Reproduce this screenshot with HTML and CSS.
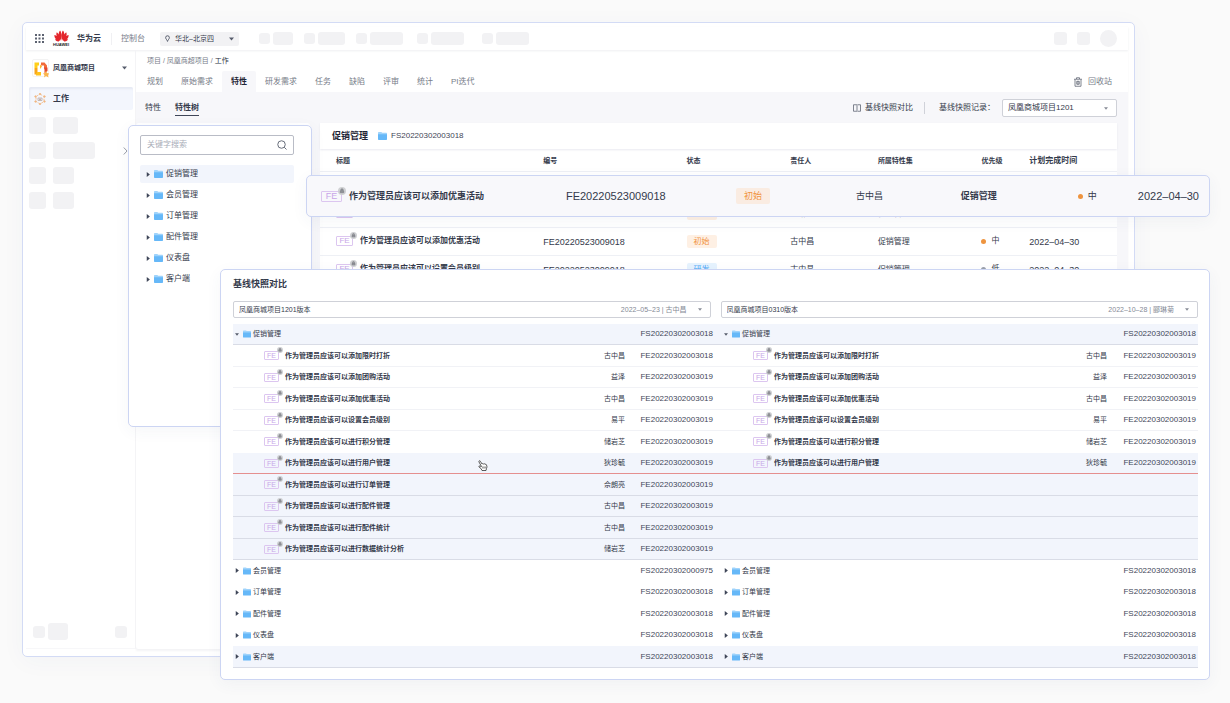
FILE: index.html
```html
<!DOCTYPE html>
<html lang="zh-CN">
<head>
<meta charset="utf-8">
<title>基线快照对比</title>
<link rel="stylesheet" href="styles.css">
</head>
<body>
<svg class="defs" width="0" height="0" aria-hidden="true">
  <symbol id="folder" viewBox="0 0 18 16"><path d="M0 1.500Q0 0 1.500 0H6.500L8.500 1.500H16.500Q18 1.500 18 3V6H0Z" fill="#9fd3fb"/><path d="M0 4.500H18V14.500Q18 16 16.500 16H1.500Q0 16 0 14.500Z" fill="#66b8f8"/></symbol>
  <symbol id="lock" viewBox="0 0 12 12"><circle cx="6" cy="6" r="6" fill="#cfd0d3"/><path d="M4.200 6V4.500a1.800 1.800 0 0 1 3.600 0V6M3.500 6h5v2.500h-5z" fill="#9a9ca1" stroke="#7c7e84" stroke-width="1"/></symbol>
  <symbol id="right" viewBox="0 0 6 8"><path d="M1 0L6 4L1 8Z" fill="#3f4658"/></symbol>
  <symbol id="down" viewBox="0 0 8 6"><path d="M0 0.500H8L4 5.500Z" fill="#575d6c"/></symbol>
</svg>

<div class="stage">
  <div class="window">
    <header class="topbar">
      <svg class="apps" viewBox="0 0 18 18" fill="#5c6270"><path d="M0 0h4v4H0zM7 0h4v4H7zM14 0h4v4h-4zM0 7h4v4H0zM7 7h4v4H7zM14 7h4v4h-4zM0 14h4v4H0zM7 14h4v4H7zM14 14h4v4h-4z"/></svg>
      <div class="logo">
        <svg viewBox="0 0 32 24" fill="#e4262c"><path d="M15 22C10 15 8 5 13 0C17 5 16 15 15 22ZM17 22C22 15 24 5 19 0C15 5 16 15 17 22ZM13 22C7 18 3 10 6 4C11 7 13 15 13 22ZM19 22C25 18 29 10 26 4C21 7 19 15 19 22ZM12 22.500C5 21 0 15 1 10C6 11 11 17 12 22.500ZM20 22.500C27 21 32 15 31 10C26 11 21 17 20 22.500ZM11 23.500C7 25 3 22 2 19C6 18.500 9 21 11 23.500ZM21 23.500C25 25 29 22 30 19C26 18.500 23 21 21 23.500Z"/></svg>
        <span>HUAWEI</span>
      </div>
      <strong class="brand">华为云</strong>
      <a class="console" href="#">控制台</a>
      <button class="region" type="button">
        <svg class="pin" viewBox="0 0 12 16"><path d="M6 1.500a4.500 4.500 0 0 1 4.500 4.500C10.500 9 7 11 6 15C5 11 1.500 9 1.500 6A4.500 4.500 0 0 1 6 1.500Z" fill="none" stroke="#575d6c" stroke-width="2.400"/></svg>
        <span>华北–北京四</span>
        <svg class="down"><use href="#down"/></svg>
      </button>
      <div class="ghosts">
        <div><i class="g-dot"></i><i class="g-w20"></i></div>
        <div><i class="g-dot"></i><i class="g-w27"></i></div>
        <div><i class="g-dot"></i><i class="g-w33"></i></div>
        <div><i class="g-dot"></i><i class="g-w33"></i></div>
        <div><i class="g-dot"></i><i class="g-w33"></i></div>
      </div>
      <div class="account"><i></i><i></i><i class="avatar"></i></div>
    </header>

    <div class="body">
      <aside class="sidebar">
        <button class="project" type="button">
          <span class="project-logo">
            <svg viewBox="0 0 32 36"><path d="M3 5H12V11H9V16H3Z" fill="#ffcf1a"/><path d="M3 16H9V29H3Z" fill="#f9a51a"/><path d="M9 24H16V31H6V27Z" fill="#ffc21a"/><path d="M16 5H23L28 11V17H22V11H16Z" fill="#f26b3a"/><path d="M22 15H29V22L23 27V20Z" fill="#e3482f"/><path d="M14 9L18 13L14 18Z" fill="#ffb52e"/><path d="M26 21L28 26L33 27L30 30L31 35L26 32L22 35L23 30L20 27L24 26Z" fill="#fbb54c"/></svg>
          </span>
          <strong>凤凰商城项目</strong>
          <svg class="down"><use href="#down"/></svg>
        </button>
        <a class="side-item" href="#">
          <svg viewBox="0 0 24 24" fill="none" stroke="#f1b680" stroke-width="1.500"><path d="M12 2L20 7V17L12 22L4 17V7Z" stroke-dasharray="5 2"/><path d="M8 10h8v5H8zM10 13h4M12 10v5" stroke="#b9a9a5"/><g fill="#f1b680"><circle cx="12" cy="2" r="1.500"/><circle cx="21" cy="7" r="1.500"/><circle cx="21" cy="17" r="1.500"/><circle cx="12" cy="22" r="1.500"/><circle cx="3" cy="17" r="1.500"/><circle cx="3" cy="7" r="1.500"/></g></svg>
          <strong>工作</strong>
        </a>
        <div class="side-ghosts">
          <div><i></i><i class="g-w25"></i></div>
          <div><i></i><i class="g-w42"></i><svg class="chevron" viewBox="0 0 10 16"><path d="M1.500 1L8 8L1.500 15" fill="none" stroke="#8d929e" stroke-width="1.800"/></svg></div>
          <div><i></i><i class="g-w21"></i></div>
          <div><i></i><i class="g-w21"></i></div>
        </div>
        <div class="side-foot"><i></i><i class="big"></i><i class="last"></i></div>
      </aside>

      <main class="main">
        <nav class="crumbs"><a href="#">项目</a> / <a href="#">凤凰商超项目</a> / <span>工作</span></nav>
        <nav class="tabs">
          <a href="#">规划</a><a href="#">原始需求</a><a class="active" href="#">特性</a><a href="#">研发需求</a><a href="#">任务</a><a href="#">缺陷</a><a href="#">评审</a><a href="#">统计</a><a href="#">PI迭代</a>
          <button class="recycle" type="button">
            <svg viewBox="0 0 16 20" fill="none" stroke="#575d6c" stroke-width="1.500"><path d="M0 4.500H16M5 4V1.500H11V4M2 5V18.500H14V5M5.500 8.500H10.500V14.500H5.500ZM8 8.500V14.500"/></svg>
            回收站
          </button>
        </nav>
        <div class="work">
          <div class="toolbar">
            <a href="#">特性</a><a class="current" href="#">特性树</a>
            <button class="compare-btn" type="button">
              <svg viewBox="0 0 16 16" fill="none" stroke="#575d6c" stroke-width="1.500"><path d="M7 1.500H1V14.500H7M8 0V16M10 1.500H15V14.500H10" /></svg>
              基线快照对比
            </button>
            <label for="record">基线快照记录：</label>
            <span class="picker record">
              <select id="record"><option>凤凰商城项目1201</option></select>
              <svg class="down"><use href="#down"/></svg>
            </span>
          </div>
          <div class="panes">
            <div class="tree-pane"></div>
            <section class="list">
              <div class="list-head"><h2>促销管理</h2><svg class="folder"><use href="#folder"/></svg><span>FS20220302003018</span></div>
              <table class="features">
                <colgroup><col class="c-title"><col class="c-id"><col class="c-state"><col class="c-owner"><col class="c-set"><col class="c-prio"><col class="c-date"></colgroup>
                <thead><tr><th>标题</th><th>编号</th><th>状态</th><th>责任人</th><th>所属特性集</th><th>优先级</th><th class="wide">计划完成时间</th></tr></thead>
                <tbody>
                  <tr><td><span class="fe">FE<svg><use href="#lock"/></svg></span><b>作为管理员应该可以添加限时打折</b></td><td class="num">FE20220523009018</td><td><span class="tag">初始</span></td><td>古中昌</td><td>促销管理</td><td><span class="prio">中</span></td><td class="num">2022–04–30</td></tr>
                  <tr><td><span class="fe">FE<svg><use href="#lock"/></svg></span><b>作为管理员应该可以添加团购活动</b></td><td class="num">FE20220523009018</td><td><span class="tag">初始</span></td><td>郦琳菊</td><td>促销管理</td><td><span class="prio">中</span></td><td class="num">2022–04–30</td></tr>
                  <tr><td><span class="fe">FE<svg><use href="#lock"/></svg></span><b>作为管理员应该可以添加优惠活动</b></td><td class="num">FE20220523009018</td><td><span class="tag">初始</span></td><td>古中昌</td><td>促销管理</td><td><span class="prio">中</span></td><td class="num">2022–04–30</td></tr>
                  <tr><td><span class="fe">FE<svg><use href="#lock"/></svg></span><b>作为管理员应该可以设置会员级别</b></td><td class="num">FE20220523009018</td><td><span class="tag blue">研发</span></td><td>古中昌</td><td>促销管理</td><td><span class="prio low">低</span></td><td class="num">2022–04–30</td></tr>
                </tbody>
              </table>
            </section>
          </div>
        </div>
      </main>
    </div>
  </div>

  <section class="card tree">
    <div class="search"><input type="text" placeholder="关键字搜索" aria-label="关键字搜索"><svg viewBox="0 0 20 20" fill="none" stroke="#575d6c" stroke-width="1.800"><circle cx="9" cy="9" r="7.500"/><path d="M14.500 14.500L19 19"/></svg></div>
    <ul>
      <li class="selected"><svg class="right"><use href="#right"/></svg><svg class="folder"><use href="#folder"/></svg>促销管理</li>
      <li><svg class="right"><use href="#right"/></svg><svg class="folder"><use href="#folder"/></svg>会员管理</li>
      <li><svg class="right"><use href="#right"/></svg><svg class="folder"><use href="#folder"/></svg>订单管理</li>
      <li><svg class="right"><use href="#right"/></svg><svg class="folder"><use href="#folder"/></svg>配件管理</li>
      <li><svg class="right"><use href="#right"/></svg><svg class="folder"><use href="#folder"/></svg>仪表盘</li>
      <li><svg class="right"><use href="#right"/></svg><svg class="folder"><use href="#folder"/></svg>客户端</li>
    </ul>
  </section>

  <div class="card lifted">
    <div><span class="fe large">FE<svg><use href="#lock"/></svg></span><b>作为管理员应该可以添加优惠活动</b></div>
    <div class="num">FE20220523009018</div>
    <div><span class="tag large">初始</span></div>
    <div>古中昌</div>
    <div><b>促销管理</b></div>
    <div><span class="prio">中</span></div>
    <div class="num">2022–04–30</div>
  </div>

  <section class="card compare">
    <h2>基线快照对比</h2>
    <div class="versions">
      <div class="picker"><select aria-label="左侧基线版本"><option>凤凰商城项目1201版本</option></select><span class="meta">2022–05–23 | 古中昌</span><svg class="down"><use href="#down"/></svg></div>
      <div class="picker"><select aria-label="右侧基线版本"><option>凤凰商城项目0310版本</option></select><span class="meta">2022–10–28 | 郦琳菊</span><svg class="down"><use href="#down"/></svg></div>
    </div>
    <table class="diff">
      <colgroup><col><col class="d-owner"><col class="d-id"><col><col class="d-owner"><col class="d-id2"></colgroup>
      <tbody>
        <tr class="group tint line"><td><svg class="down"><use href="#down"/></svg><svg class="folder"><use href="#folder"/></svg>促销管理</td><td></td><td>FS20220302003018</td><td><svg class="down"><use href="#down"/></svg><svg class="folder"><use href="#folder"/></svg>促销管理</td><td></td><td>FS20220302003018</td></tr>
        <tr class="item"><td><span class="fe">FE<svg><use href="#lock"/></svg></span><b>作为管理员应该可以添加限时打折</b></td><td>古中昌</td><td>FE20220302003018</td><td><span class="fe">FE<svg><use href="#lock"/></svg></span><b>作为管理员应该可以添加限时打折</b></td><td>古中昌</td><td>FE20220302003019</td></tr>
        <tr class="item"><td><span class="fe">FE<svg><use href="#lock"/></svg></span><b>作为管理员应该可以添加团购活动</b></td><td>益泽</td><td>FE20220302003019</td><td><span class="fe">FE<svg><use href="#lock"/></svg></span><b>作为管理员应该可以添加团购活动</b></td><td>益泽</td><td>FE20220302003019</td></tr>
        <tr class="item"><td><span class="fe">FE<svg><use href="#lock"/></svg></span><b>作为管理员应该可以添加优惠活动</b></td><td>古中昌</td><td>FE20220302003019</td><td><span class="fe">FE<svg><use href="#lock"/></svg></span><b>作为管理员应该可以添加优惠活动</b></td><td>古中昌</td><td>FE20220302003019</td></tr>
        <tr class="item"><td><span class="fe">FE<svg><use href="#lock"/></svg></span><b>作为管理员应该可以设置会员级别</b></td><td>易平</td><td>FE20220302003019</td><td><span class="fe">FE<svg><use href="#lock"/></svg></span><b>作为管理员应该可以设置会员级别</b></td><td>易平</td><td>FE20220302003019</td></tr>
        <tr class="item plain"><td><span class="fe">FE<svg><use href="#lock"/></svg></span><b>作为管理员应该可以进行积分管理</b></td><td>储岩芝</td><td>FE20220302003019</td><td><span class="fe">FE<svg><use href="#lock"/></svg></span><b>作为管理员应该可以进行积分管理</b></td><td>储岩芝</td><td>FE20220302003019</td></tr>
        <tr class="item tint removed"><td><span class="fe">FE<svg><use href="#lock"/></svg></span><b>作为管理员应该可以进行用户管理</b></td><td>狄珍毓</td><td>FE20220302003019</td><td><span class="fe">FE<svg><use href="#lock"/></svg></span><b>作为管理员应该可以进行用户管理</b></td><td>狄珍毓</td><td>FE20220302003019</td></tr>
        <tr class="item tint line"><td><span class="fe">FE<svg><use href="#lock"/></svg></span><b>作为管理员应该可以进行订单管理</b></td><td>佘朗亮</td><td>FE20220302003019</td><td></td><td></td><td></td></tr>
        <tr class="item tint line"><td><span class="fe">FE<svg><use href="#lock"/></svg></span><b>作为管理员应该可以进行配件管理</b></td><td>古中昌</td><td>FE20220302003019</td><td></td><td></td><td></td></tr>
        <tr class="item tint line"><td><span class="fe">FE<svg><use href="#lock"/></svg></span><b>作为管理员应该可以进行配件统计</b></td><td>古中昌</td><td>FE20220302003019</td><td></td><td></td><td></td></tr>
        <tr class="item tint line"><td><span class="fe">FE<svg><use href="#lock"/></svg></span><b>作为管理员应该可以进行数据统计分析</b></td><td>储岩芝</td><td>FE20220302003019</td><td></td><td></td><td></td></tr>
        <tr class="group plain"><td><svg class="right"><use href="#right"/></svg><svg class="folder"><use href="#folder"/></svg>会员管理</td><td></td><td>FS20220302000975</td><td><svg class="right"><use href="#right"/></svg><svg class="folder"><use href="#folder"/></svg>会员管理</td><td></td><td>FS20220302003018</td></tr>
        <tr class="group plain"><td><svg class="right"><use href="#right"/></svg><svg class="folder"><use href="#folder"/></svg>订单管理</td><td></td><td>FS20220302003018</td><td><svg class="right"><use href="#right"/></svg><svg class="folder"><use href="#folder"/></svg>订单管理</td><td></td><td>FS20220302003018</td></tr>
        <tr class="group plain"><td><svg class="right"><use href="#right"/></svg><svg class="folder"><use href="#folder"/></svg>配件管理</td><td></td><td>FS20220302003018</td><td><svg class="right"><use href="#right"/></svg><svg class="folder"><use href="#folder"/></svg>配件管理</td><td></td><td>FS20220302003018</td></tr>
        <tr class="group plain"><td><svg class="right"><use href="#right"/></svg><svg class="folder"><use href="#folder"/></svg>仪表盘</td><td></td><td>FS20220302003018</td><td><svg class="right"><use href="#right"/></svg><svg class="folder"><use href="#folder"/></svg>仪表盘</td><td></td><td>FS20220302003018</td></tr>
        <tr class="group tint line"><td><svg class="right"><use href="#right"/></svg><svg class="folder"><use href="#folder"/></svg>客户端</td><td></td><td>FS20220302003018</td><td><svg class="right"><use href="#right"/></svg><svg class="folder"><use href="#folder"/></svg>客户端</td><td></td><td>FS20220302003018</td></tr>
      </tbody>
    </table>
    <svg class="hand" viewBox="0 0 20 22"><path d="M7 13L2 4Q1 2 3 1.500Q4.500 1.500 5 3L8 8Q9 6.500 11 8Q12.500 6.500 14 8.500Q16 7.500 17 10Q19 14 17 17L16 21H8L6 17L2 14Q1 12 3 12Z" fill="#fff" stroke="#333" stroke-width="1.600" stroke-linejoin="round"/><path d="M9.500 13v4M12 13v4M14.500 13v4" stroke="#333" stroke-width="1.200"/></svg>
  </section>
</div>
</body>
</html>
```

FILE: styles.css
```css
* { box-sizing: border-box; }
body {
  margin: 0;
  background: #fafafa;
  color: #343a4b;
  font: 8px/12px "Liberation Sans", "Noto Sans CJK SC", sans-serif;
}
button, input, select { font: inherit; color: inherit; border: 0; padding: 0; margin: 0; background: none; }
select { appearance: none; }
a { color: inherit; text-decoration: none; }
h2, ul { margin: 0; padding: 0; }
i { display: block; flex: none; background: #f2f2f4; border-radius: 3px; }
svg { display: block; flex: none; }
.defs { position: absolute; }
.down { width: 5px; height: 4px; }
.right { width: 4px; height: 5px; }
.folder { width: 9px; height: 8px; }

.stage { position: relative; display: flex; min-height: 100vh; padding: 22px 95px 46px 22px; }
.window {
  flex: 1;
  display: flex;
  flex-direction: column;
  padding: 4px 6px 7px 3px;
  background: #fff;
  border: 1px solid #d3dbf5;
  border-radius: 5px;
  box-shadow: 0 4px 24px rgba(60, 70, 120, .04);
}

.topbar { display: flex; align-items: center; height: 23px; padding: 0 11px 0 9px; box-shadow: 0 1px 2px rgba(40, 50, 80, .08); }
.apps { width: 9px; height: 9px; }
.logo { width: 16px; margin-left: 9px; display: flex; flex-direction: column; align-items: center; }
.logo svg { width: 15px; height: 12px; }
.logo span { font-size: 4px; line-height: 5px; font-weight: 700; color: #222; }
.brand { margin-left: 8px; padding-right: 10px; border-right: 1px solid #f0f0f3; }
.console { margin-left: 9px; color: #777c88; }
.region { display: flex; align-items: center; width: 79px; height: 14px; margin-left: 15px; padding: 0 5px; background: #f2f2f4; border-radius: 2px; font-size: 7px; }
.pin { width: 5px; height: 7px; margin-right: 5px; }
.region .down { margin-left: auto; }
.ghosts { display: flex; gap: 11px; margin-left: 20px; }
.ghosts div { display: flex; align-items: center; gap: 3px; }
.ghosts div:nth-child(n+4) { margin-left: 3px; }
.ghosts div:last-child { margin-left: 7px; }
.ghosts i { height: 13px; }
.ghosts .g-dot { width: 11px; height: 11px; }
.g-w20 { width: 20px; }
.g-w21 { width: 21px; }
.g-w25 { width: 25px; }
.g-w27 { width: 27px; }
.g-w33 { width: 33px; }
.g-w42 { width: 42px; }
.account { display: flex; align-items: center; gap: 10px; margin-left: auto; }
.account i { width: 13px; height: 13px; }
.account .avatar { width: 17px; height: 17px; border-radius: 50%; }

.body { flex: 1; display: flex; }
.sidebar { width: 110px; display: flex; flex-direction: column; padding: 8px 2px 8px 3px; border-right: 1px solid #f3f3f6; border-bottom: 1px solid #f7f7f9; }
.project { display: flex; align-items: center; height: 19px; padding: 0 6px 0 3px; font-size: 7px; }
.project-logo { width: 17px; height: 18px; border: 1px solid #f3f3f3; border-radius: 2px; }
.project-logo svg { width: 16px; height: 18px; }
.project strong { margin-left: 4px; }
.project .down { margin-left: auto; }
.side-item { display: flex; align-items: center; height: 23px; margin-top: 10px; padding-left: 5px; background: #f3f6fd; border-radius: 2px; box-shadow: inset 1px 2px 2px #e6e9f3; }
.side-item svg { width: 12px; height: 12px; margin-right: 7px; }
.side-ghosts { display: flex; flex-direction: column; gap: 8px; margin-top: 7px; }
.side-ghosts div { display: flex; align-items: center; gap: 7px; }
.side-ghosts i { height: 17px; }
.side-ghosts i:first-child { width: 17px; }
.chevron { width: 5px; height: 8px; margin-left: auto; margin-right: 5px; }
.side-foot { display: flex; align-items: center; gap: 3px; margin-top: auto; padding: 0 6px 0 4px; }
.side-foot i { width: 12px; height: 12px; }
.side-foot .big { width: 20px; height: 17px; }
.side-foot .last { margin-left: auto; }

.main { flex: 1; min-width: 0; display: flex; flex-direction: column; box-shadow: 0 2px 2px #f4f4f6; }
.crumbs { height: 21px; padding: 5px 11px; font-size: 7px; color: #777c88; }
.crumbs span { color: #2b3142; }
.tabs { display: flex; padding: 0 16px 0 2px; color: #777c88; }
.tabs a { height: 21px; padding: 5px 9px 4px; }
.tabs .active { background: #f7f7fa; border-radius: 2px 2px 0 0; color: #1f2535; font-weight: 700; }
.recycle { display: flex; align-items: center; gap: 6px; margin-left: auto; }
.recycle svg { width: 8px; height: 10px; }
.work { flex: 1; display: flex; flex-direction: column; padding: 7px 11px 0 0; background: #f7f7fa; }
.toolbar { display: flex; align-items: center; height: 18px; padding-left: 9px; }
.toolbar a { padding: 2px 0 1px; border-bottom: 1px solid transparent; }
.toolbar .current { margin-left: 14px; border-color: #3f4658; font-weight: 700; }
.compare-btn { display: flex; align-items: center; gap: 4px; margin-left: auto; padding-right: 11px; border-right: 1px solid #d0d2d9; }
.compare-btn svg { width: 8px; height: 8px; }
.toolbar label { margin: 0 7px 0 14px; }
.picker { display: grid; align-items: center; background: #fff; border: 1px solid #cfd1d8; border-radius: 2px; }
.picker select { grid-area: 1 / 1; width: 100%; height: 16px; padding: 0 5px; }
.picker .down { grid-area: 1 / 1; justify-self: end; width: 4px; height: 3px; margin-right: 8px; opacity: .7; pointer-events: none; }
.record { width: 115px; }

.panes { flex: 1; display: flex; gap: 10px; margin-top: 6px; }
.tree-pane { flex: none; width: 174px; background: #fff; border-radius: 3px; }
.list { flex: 1; min-width: 0; background: #fff; }
.list-head { display: flex; align-items: center; height: 26px; padding-left: 12px; margin-bottom: 1px; box-shadow: 0 1px 2px #e9eaf0; color: #3f4658; }
.list-head h2 { font-size: 9px; color: #1f2535; }
.list-head .folder { margin: 0 4px 0 10px; }
table { width: 100%; border-collapse: separate; border-spacing: 0; table-layout: fixed; }
th, td { padding: 0; text-align: left; white-space: nowrap; }
.c-title { width: 28%; }
.c-id { width: 18%; }
.c-state { width: 13%; }
.c-owner { width: 11%; }
.c-set { width: 13%; }
.c-prio { width: 6%; }
.c-date { width: 11%; }
.features th { height: 22px; font-size: 7px; border-bottom: 1px solid #eef0f5; }
.features th.wide { font-size: 8px; }
.features td { height: 28px; border-bottom: 1px solid #eef0f5; }
.features th:first-child, .features td:first-child { padding-left: 16px; }
.features .num { font-size: 9px; }
.features b { margin-left: 7px; }
.fe {
  position: relative;
  display: inline-block;
  width: 17px;
  height: 10px;
  border: 1px solid #dcc6f0;
  border-radius: 1px;
  color: #c8a6e8;
  font-size: 8px;
  line-height: 8px;
  text-align: center;
  vertical-align: middle;
}
.fe svg { position: absolute; top: -5px; right: -5px; width: 7px; height: 7px; }
.fe + b { vertical-align: middle; }
.fe.large { width: 21px; height: 11px; font-size: 9px; line-height: 9px; }
.fe.large svg { width: 8px; height: 8px; }
.tag { display: inline-block; padding: 1px 7px 0; height: 13px; border-radius: 2px; background: #fef0e4; color: #f19340; }
.tag.blue { background: #e6f3fe; color: #4ba6f5; }
.tag.large { height: 16px; padding: 2px 8px; background: #faece2; }
.prio { display: inline-flex; align-items: center; gap: 5px; }
.prio::before { content: ""; width: 5px; height: 5px; border-radius: 50%; background: #ee943f; }
.prio.low::before { background: #9aa0ad; }

.card { position: absolute; background: #fff; border: 1px solid #ccd5f3; border-radius: 5px; box-shadow: 0 4px 16px rgba(60, 70, 120, .05); }
.tree { top: 125px; left: 128px; width: 184px; min-height: 302px; padding: 9px 17px 12px 11px; }
.search { display: flex; align-items: center; height: 20px; padding: 0 6px; border: 1px solid #b9bcc6; border-radius: 2px; }
.search input { flex: 1; min-width: 0; outline: 0; }
.search input::placeholder { color: #a9adb8; opacity: 1; }
.search svg { width: 10px; height: 10px; }
.tree ul { display: flex; flex-direction: column; gap: 3px; margin-top: 10px; list-style: none; }
.tree li { display: flex; align-items: center; height: 18px; padding-left: 6px; border-radius: 2px; }
.tree .selected { background: #f2f5fc; }
.tree .right { margin-right: 4px; }
.tree .folder { margin-right: 3px; }

.lifted {
  top: 175px;
  left: 306px;
  right: 20px;
  display: grid;
  grid-template-columns: 245fr 170fr 120fr 105fr 117fr 60fr 61fr;
  align-items: center;
  height: 42px;
  padding: 0 10px 0 14px;
  background: #f8f8fb;
  font-size: 9px;
  white-space: nowrap;
}
.lifted b { margin-left: 7px; }
.lifted div > b:first-child { margin-left: 0; }
.lifted .num { font-size: 11px; }

.compare { top: 269px; left: 220px; right: 20px; padding: 8px 11px 11px 12px; }
.compare h2 { font-size: 9px; line-height: 12px; }
.versions { display: grid; grid-template-columns: 1fr 1fr; gap: 10px; margin: 11px 0 6px; font-size: 7px; }
.versions .picker select { height: 15px; }
.versions .meta { grid-area: 1 / 1; justify-self: end; margin-right: 23px; color: #858a96; pointer-events: none; }
.diff { font-size: 7px; }
.diff tr { height: 21px; }
.diff tr:nth-child(even) { height: 22px; }
.diff td { border-bottom: 1px solid #f1f2f6; }
.d-owner { width: 60px; }
.d-id { width: 90px; }
.d-id2 { width: 91px; }
.diff td:nth-child(3n+2) { text-align: right; }
.diff td:nth-child(3n) { padding-right: 2px; font-size: 8px; text-align: right; color: #3f4658; }
.diff td svg { display: inline-block; vertical-align: middle; }
.diff td > .right, .diff td > .down { margin: 0 4px 0 2px; }
.diff td > .down { width: 4px; height: 3px; }
.diff td > .folder { width: 8px; margin-right: 2px; }
.diff td:nth-child(4) { padding-left: 7px; }
.diff .item td:first-child { padding-left: 31px; }
.diff .item td:nth-child(4) { padding-left: 38px; }
.diff .fe { width: 15px; height: 9px; font-size: 7px; line-height: 7px; }
.diff .fe svg { width: 6px; height: 6px; }
.diff b { margin-left: 6px; }
.diff .tint td { background: #f2f5fc; }
.diff .plain td { border-bottom-color: transparent; }
.diff .line td { border-bottom-color: #d9dce6; }
.diff .removed td { border-bottom-color: #e58f8f; }
.hand { position: absolute; left: 27%; margin-left: -10px; top: 190px; width: 10px; height: 11px; }
```
